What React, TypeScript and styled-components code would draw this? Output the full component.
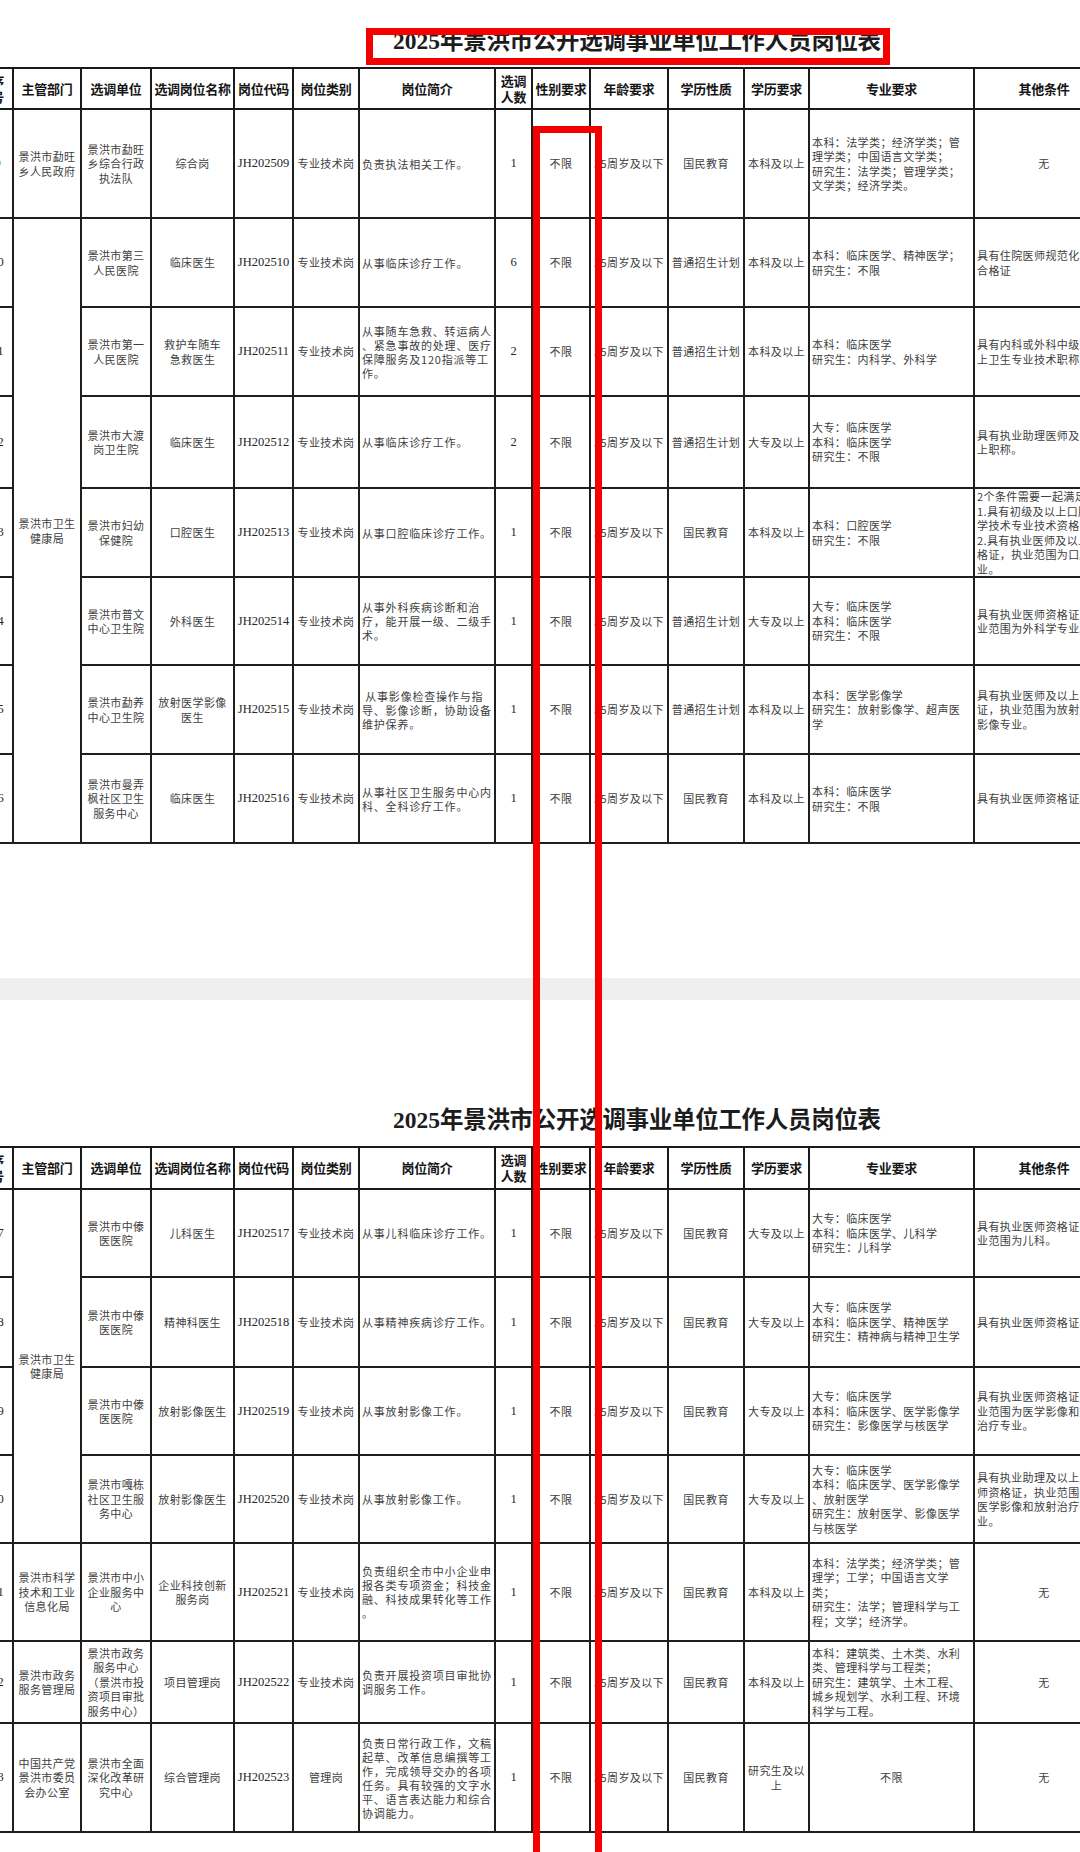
import { styled, createGlobalStyle } from "styled-components";

const GlobalStyle = createGlobalStyle`
  html, body {
    margin: 0;
    padding: 0;
    background: #fff;
  }
  body {
    width: 1080px;
    height: 1852px;
    overflow: hidden;
    font-family: "Noto Sans CJK SC", "Noto Sans", sans-serif;
  }
`;

type Dept = { text: string; span: number };
type Row = {
  no: number;
  h: number;
  dept?: Dept;
  unit: string;
  post: string;
  code: string;
  kind: string;
  desc: string;
  count: number;
  eduType: string;
  edu: string;
  major: string;
  majorCenter?: boolean;
  other: string;
  otherCenter?: boolean;
};

const COLS = [31, 68, 70, 83, 59, 66, 136, 37, 58, 78, 76, 65, 165, 140];
const HEADS = [
  "序\n号",
  "主管部门",
  "选调单位",
  "选调岗位名称",
  "岗位代码",
  "岗位类别",
  "岗位简介",
  "选调\n人数",
  "性别要求",
  "年龄要求",
  "学历性质",
  "学历要求",
  "专业要求",
  "其他条件",
];

const TABLE_ONE: Row[] = [
  {
    no: 9,
    h: 109,
    dept: { text: "景洪市勐旺\n乡人民政府", span: 1 },
    unit: "景洪市勐旺\n乡综合行政\n执法队",
    post: "综合岗",
    code: "JH202509",
    kind: "专业技术岗",
    desc: "负责执法相关工作。",
    count: 1,
    eduType: "国民教育",
    edu: "本科及以上",
    major: "本科：法学类；经济学类；管\n理学类；中国语言文学类；\n研究生：法学类；管理学类；\n文学类；经济学类。",
    other: "无",
    otherCenter: true,
  },
  {
    no: 10,
    h: 89,
    dept: { text: "景洪市卫生\n健康局", span: 7 },
    unit: "景洪市第三\n人民医院",
    post: "临床医生",
    code: "JH202510",
    kind: "专业技术岗",
    desc: "从事临床诊疗工作。",
    count: 6,
    eduType: "普通招生计划",
    edu: "本科及以上",
    major: "本科：临床医学、精神医学；\n研究生：不限",
    other: "具有住院医师规范化培训\n合格证",
  },
  {
    no: 11,
    h: 89,
    unit: "景洪市第一\n人民医院",
    post: "救护车随车\n急救医生",
    code: "JH202511",
    kind: "专业技术岗",
    desc: "从事随车急救、转运病人\n、紧急事故的处理、医疗\n保障服务及120指派等工\n作。",
    count: 2,
    eduType: "普通招生计划",
    edu: "本科及以上",
    major: "本科：临床医学\n研究生：内科学、外科学",
    other: "具有内科或外科中级及以\n上卫生专业技术职称",
  },
  {
    no: 12,
    h: 92,
    unit: "景洪市大渡\n岗卫生院",
    post: "临床医生",
    code: "JH202512",
    kind: "专业技术岗",
    desc: "从事临床诊疗工作。",
    count: 2,
    eduType: "普通招生计划",
    edu: "大专及以上",
    major: "大专：临床医学\n本科：临床医学\n研究生：不限",
    other: "具有执业助理医师及以\n上职称。",
  },
  {
    no: 13,
    h: 89,
    unit: "景洪市妇幼\n保健院",
    post: "口腔医生",
    code: "JH202513",
    kind: "专业技术岗",
    desc: "从事口腔临床诊疗工作。",
    count: 1,
    eduType: "国民教育",
    edu: "本科及以上",
    major: "本科：口腔医学\n研究生：不限",
    other: "2个条件需要一起满足：\n1.具有初级及以上口腔医\n学技术专业技术资格；\n2.具有执业医师及以上资\n格证，执业范围为口腔专\n业。",
  },
  {
    no: 14,
    h: 88,
    unit: "景洪市普文\n中心卫生院",
    post: "外科医生",
    code: "JH202514",
    kind: "专业技术岗",
    desc: "从事外科疾病诊断和治\n疗，能开展一级、二级手\n术。",
    count: 1,
    eduType: "普通招生计划",
    edu: "大专及以上",
    major: "大专：临床医学\n本科：临床医学\n研究生：不限",
    other: "具有执业医师资格证，执\n业范围为外科学专业。",
  },
  {
    no: 15,
    h: 89,
    unit: "景洪市勐养\n中心卫生院",
    post: "放射医学影像\n医生",
    code: "JH202515",
    kind: "专业技术岗",
    desc: " 从事影像检查操作与指\n导、影像诊断，协助设备\n维护保养。",
    count: 1,
    eduType: "普通招生计划",
    edu: "本科及以上",
    major: "本科：医学影像学\n研究生：放射影像学、超声医\n学",
    other: "具有执业医师及以上资格\n证，执业范围为放射医学\n影像专业。",
  },
  {
    no: 16,
    h: 89,
    unit: "景洪市曼弄\n枫社区卫生\n服务中心",
    post: "临床医生",
    code: "JH202516",
    kind: "专业技术岗",
    desc: "从事社区卫生服务中心内\n科、全科诊疗工作。",
    count: 1,
    eduType: "国民教育",
    edu: "本科及以上",
    major: "本科：临床医学\n研究生：不限",
    other: "具有执业医师资格证。",
  },
];

const TABLE_TWO: Row[] = [
  {
    no: 17,
    h: 88,
    dept: { text: "景洪市卫生\n健康局", span: 4 },
    unit: "景洪市中傣\n医医院",
    post: "儿科医生",
    code: "JH202517",
    kind: "专业技术岗",
    desc: "从事儿科临床诊疗工作。",
    count: 1,
    eduType: "国民教育",
    edu: "大专及以上",
    major: "大专：临床医学\n本科：临床医学、儿科学\n研究生：儿科学",
    other: "具有执业医师资格证，执\n业范围为儿科。",
  },
  {
    no: 18,
    h: 90,
    unit: "景洪市中傣\n医医院",
    post: "精神科医生",
    code: "JH202518",
    kind: "专业技术岗",
    desc: "从事精神疾病诊疗工作。",
    count: 1,
    eduType: "国民教育",
    edu: "大专及以上",
    major: "大专：临床医学\n本科：临床医学、精神医学\n研究生：精神病与精神卫生学",
    other: "具有执业医师资格证。",
  },
  {
    no: 19,
    h: 88,
    unit: "景洪市中傣\n医医院",
    post: "放射影像医生",
    code: "JH202519",
    kind: "专业技术岗",
    desc: "从事放射影像工作。",
    count: 1,
    eduType: "国民教育",
    edu: "大专及以上",
    major: "大专：临床医学\n本科：临床医学、医学影像学\n研究生：影像医学与核医学",
    other: "具有执业医师资格证，执\n业范围为医学影像和放射\n治疗专业。",
  },
  {
    no: 20,
    h: 88,
    unit: "景洪市嘎栋\n社区卫生服\n务中心",
    post: "放射影像医生",
    code: "JH202520",
    kind: "专业技术岗",
    desc: "从事放射影像工作。",
    count: 1,
    eduType: "国民教育",
    edu: "大专及以上",
    major: "大专：临床医学\n本科：临床医学、医学影像学\n、放射医学\n研究生：放射医学、影像医学\n与核医学",
    other: "具有执业助理及以上医\n师资格证，执业范围为\n医学影像和放射治疗专\n业。",
  },
  {
    no: 21,
    h: 98,
    dept: { text: "景洪市科学\n技术和工业\n信息化局", span: 1 },
    unit: "景洪市中小\n企业服务中\n心",
    post: "企业科技创新\n服务岗",
    code: "JH202521",
    kind: "专业技术岗",
    desc: "负责组织全市中小企业申\n报各类专项资金；科技金\n融、科技成果转化等工作\n。",
    count: 1,
    eduType: "国民教育",
    edu: "本科及以上",
    major: "本科：法学类；经济学类；管\n理学；工学；中国语言文学\n类；\n研究生：法学；管理科学与工\n程；文学；经济学。",
    other: "无",
    otherCenter: true,
  },
  {
    no: 22,
    h: 82,
    dept: { text: "景洪市政务\n服务管理局", span: 1 },
    unit: "景洪市政务\n服务中心\n（景洪市投\n资项目审批\n服务中心）",
    post: "项目管理岗",
    code: "JH202522",
    kind: "专业技术岗",
    desc: "负责开展投资项目审批协\n调服务工作。",
    count: 1,
    eduType: "国民教育",
    edu: "本科及以上",
    major: "本科：建筑类、土木类、水利\n类、管理科学与工程类；\n研究生：建筑学、土木工程、\n城乡规划学、水利工程、环境\n科学与工程。",
    other: "无",
    otherCenter: true,
  },
  {
    no: 23,
    h: 109,
    dept: { text: "中国共产党\n景洪市委员\n会办公室", span: 1 },
    unit: "景洪市全面\n深化改革研\n究中心",
    post: "综合管理岗",
    code: "JH202523",
    kind: "管理岗",
    desc: "负责日常行政工作，文稿\n起草、改革信息编撰等工\n作，完成领导交办的各项\n任务。具有较强的文字水\n平、语言表达能力和综合\n协调能力。",
    count: 1,
    eduType: "国民教育",
    edu: "研究生及以\n上",
    major: "不限",
    majorCenter: true,
    other: "无",
    otherCenter: true,
  },
];

function Sheet({
  rows,
  headHeight,
  boxed,
}: {
  rows: Row[];
  headHeight: number;
  boxed?: boolean;
}) {
  return (
    <SheetWrap>
      <TitleRow>
        <Title>
          <TitleNum>2025</TitleNum>年景洪市公开选调事业单位工作人员岗位表
        </Title>
        {boxed && <TitleMark />}
      </TitleRow>
      <Table>
        <colgroup>
          {COLS.map((w, i) => (
            <Col key={i} $w={w} />
          ))}
        </colgroup>
        <thead>
          <Tr $h={headHeight}>
            {HEADS.map((h, i) => (
              <Th key={i} $tight={i === 0 || i === 7}>
                {h}
              </Th>
            ))}
          </Tr>
        </thead>
        <tbody>
          {rows.map((r) => (
            <Tr key={r.no} $h={r.h}>
              <Td $serif>{r.no}</Td>
              {r.dept && <Td rowSpan={r.dept.span}>{r.dept.text}</Td>}
              <Td>{r.unit}</Td>
              <Td>{r.post}</Td>
              <Td $serif>{r.code}</Td>
              <Td>{r.kind}</Td>
              <Td $left $wide>
                {r.desc}
              </Td>
              <Td $serif>{r.count}</Td>
              <Td>不限</Td>
              <Td>35周岁及以下</Td>
              <Td>{r.eduType}</Td>
              <Td>{r.edu}</Td>
              <Td $left={!r.majorCenter}>{r.major}</Td>
              <Td $left={!r.otherCenter}>{r.other}</Td>
            </Tr>
          ))}
        </tbody>
      </Table>
    </SheetWrap>
  );
}

export default function App() {
  return (
    <>
      <GlobalStyle />
      <Page>
        <Sheet rows={TABLE_ONE} headHeight={41} boxed />
        <Band />
        <SecondSheet>
          <Sheet rows={TABLE_TWO} headHeight={42} />
        </SecondSheet>
        <ColumnMark />
      </Page>
    </>
  );
}

const Page = styled.div`
  position: relative;
  width: 1080px;
  height: 1852px;
  overflow: hidden;
  padding-top: 24px;
  box-sizing: border-box;
  background: #fff;
`;

const SheetWrap = styled.section`
  display: flex;
  flex-direction: column;
`;

const SecondSheet = styled.div`
  padding-top: 103px;
`;

const TitleRow = styled.div`
  position: relative;
  height: 30px;
  margin-bottom: 13px;
  padding-left: 393px;
`;

const Title = styled.h1`
  margin: 0;
  font-family: "Noto Sans CJK SC", sans-serif;
  font-size: 23.5px;
  line-height: 30px;
  font-weight: 700;
  color: #1c1c1c;
  white-space: nowrap;
  letter-spacing: -0.3px;
`;

const TitleNum = styled.span`
  font-family: "Liberation Serif", serif;
  font-weight: 700;
  letter-spacing: 0;
`;

const TitleMark = styled.div`
  position: absolute;
  left: 366px;
  top: 4px;
  width: 524px;
  height: 37px;
  box-sizing: border-box;
  border: 7px solid #f50000;
`;

const Table = styled.table`
  width: 1132px;
  margin-left: -19px;
  table-layout: fixed;
  border-collapse: collapse;
`;

const Col = styled.col<{ $w: number }>`
  width: ${(p) => p.$w}px;
`;

const Tr = styled.tr<{ $h: number }>`
  height: ${(p) => p.$h}px;
`;

const Th = styled.th<{ $tight?: boolean }>`
  padding: 0;
  border: 2px solid #1a1a1a;
  font-family: "Noto Sans CJK SC", sans-serif;
  font-size: 13px;
  line-height: ${(p) => (p.$tight ? "16px" : "18px")};
  font-weight: 700;
  color: #151515;
  text-align: center;
  vertical-align: middle;
  white-space: pre;
  letter-spacing: -0.3px;
`;

const Td = styled.td<{
  $left?: boolean;
  $serif?: boolean;
  $wide?: boolean;
}>`
  padding: 0 0 0 ${(p) => (p.$left ? "2px" : "0")};
  border: 2px solid #1f1f1f;
  font-family: ${(p) =>
    p.$serif
      ? '"Liberation Serif", "Noto Sans CJK SC", serif'
      : '"Noto Sans CJK SC", sans-serif'};
  font-size: ${(p) => (p.$serif ? "12.5px" : "11px")};
  line-height: ${(p) => (p.$wide ? "14px" : "14.5px")};
  letter-spacing: ${(p) => (p.$serif ? "0" : p.$wide ? "0.8px" : "0.4px")};
  color: ${(p) => (p.$serif ? "#262626" : "#404040")};
  text-align: ${(p) => (p.$left ? "left" : "center")};
  vertical-align: middle;
  white-space: pre;
  overflow: hidden;
`;

const Band = styled.div`
  height: 22px;
  margin-top: 134px;
  background: #efefef;
`;

const ColumnMark = styled.div`
  position: absolute;
  left: 533px;
  top: 126px;
  width: 69px;
  height: 1800px;
  box-sizing: border-box;
  border: 7px solid #f50000;
  border-bottom: 0;
`;
